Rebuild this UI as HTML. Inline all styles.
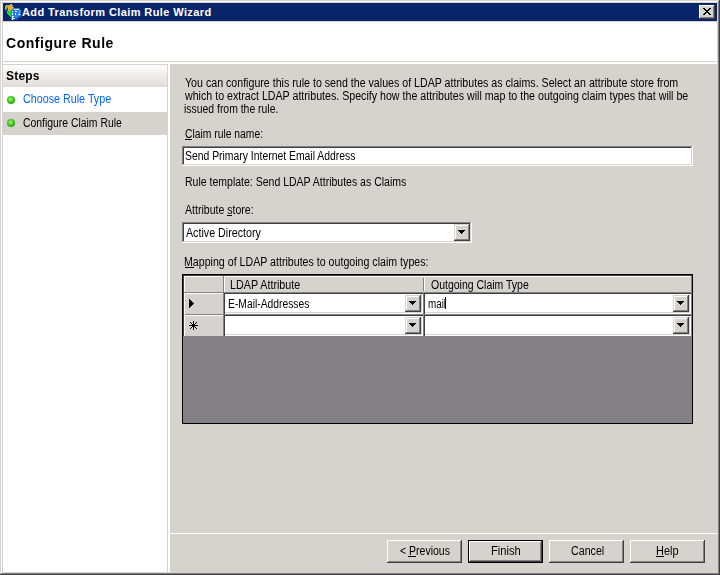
<!DOCTYPE html>
<html><head><meta charset="utf-8">
<style>
*{box-sizing:border-box;margin:0;padding:0}
html,body{width:720px;height:575px;overflow:hidden;background:#d6d3ce}
body{position:relative;font-family:"Liberation Sans",sans-serif;font-size:12px;color:#000}
.a{position:absolute}
.t{position:absolute;white-space:nowrap;font-size:12px;line-height:13px;transform-origin:0 0;filter:grayscale(1)}
</style></head><body>
<div class="a" style="left:0px;top:0px;width:720px;height:575px;background:#404040"></div>
<div class="a" style="left:0px;top:0px;width:719px;height:574px;background:#d6d3ce"></div>
<div class="a" style="left:1px;top:1px;width:718px;height:573px;background:#838183"></div>
<div class="a" style="left:1px;top:1px;width:717px;height:572px;background:#fff"></div>
<div class="a" style="left:2px;top:2px;width:716px;height:571px;background:#d6d3ce"></div>
<div class="a" style="left:3px;top:3px;width:714px;height:18px;background:#0a246a"></div>
<svg class="a" style="left:4px;top:4px" width="18" height="16" viewBox="0 0 18 16" shape-rendering="crispEdges"><rect x="6" y="0" width="1" height="1" fill="#80b8e0"/><rect x="7" y="0" width="1" height="1" fill="#80b8e0"/><rect x="2" y="1" width="1" height="1" fill="#f8a820"/><rect x="3" y="1" width="1" height="1" fill="#f8a820"/><rect x="4" y="1" width="1" height="1" fill="#f8a820"/><rect x="5" y="1" width="1" height="1" fill="#f8a820"/><rect x="6" y="1" width="1" height="1" fill="#60a8e8"/><rect x="7" y="1" width="1" height="1" fill="#80b8e0"/><rect x="8" y="1" width="1" height="1" fill="#60a8e8"/><rect x="1" y="2" width="1" height="1" fill="#f8a820"/><rect x="2" y="2" width="1" height="1" fill="#f8a820"/><rect x="3" y="2" width="1" height="1" fill="#20d040"/><rect x="4" y="2" width="1" height="1" fill="#f8a820"/><rect x="5" y="2" width="1" height="1" fill="#f8a820"/><rect x="6" y="2" width="1" height="1" fill="#f8a820"/><rect x="7" y="2" width="1" height="1" fill="#f8a820"/><rect x="8" y="2" width="1" height="1" fill="#f8a820"/><rect x="1" y="3" width="1" height="1" fill="#f8a820"/><rect x="2" y="3" width="1" height="1" fill="#20d040"/><rect x="3" y="3" width="1" height="1" fill="#20d040"/><rect x="4" y="3" width="1" height="1" fill="#f8a820"/><rect x="5" y="3" width="1" height="1" fill="#f8a820"/><rect x="6" y="3" width="1" height="1" fill="#f8a820"/><rect x="7" y="3" width="1" height="1" fill="#f8a820"/><rect x="8" y="3" width="1" height="1" fill="#f8a820"/><rect x="9" y="3" width="1" height="1" fill="#20d040"/><rect x="1" y="4" width="1" height="1" fill="#f8a820"/><rect x="2" y="4" width="1" height="1" fill="#20d040"/><rect x="3" y="4" width="1" height="1" fill="#1850c8"/><rect x="4" y="4" width="1" height="1" fill="#f8a820"/><rect x="5" y="4" width="1" height="1" fill="#f8a820"/><rect x="6" y="4" width="1" height="1" fill="#f8a820"/><rect x="7" y="4" width="1" height="1" fill="#f8a820"/><rect x="8" y="4" width="1" height="1" fill="#f8a820"/><rect x="9" y="4" width="1" height="1" fill="#20d040"/><rect x="10" y="4" width="1" height="1" fill="#2a80e0"/><rect x="11" y="4" width="1" height="1" fill="#2a80e0"/><rect x="12" y="4" width="1" height="1" fill="#2a80e0"/><rect x="13" y="4" width="1" height="1" fill="#2a80e0"/><rect x="14" y="4" width="1" height="1" fill="#2a80e0"/><rect x="15" y="4" width="1" height="1" fill="#2a80e0"/><rect x="1" y="5" width="1" height="1" fill="#60a8e8"/><rect x="2" y="5" width="1" height="1" fill="#1850c8"/><rect x="3" y="5" width="1" height="1" fill="#1850c8"/><rect x="4" y="5" width="1" height="1" fill="#f8a820"/><rect x="5" y="5" width="1" height="1" fill="#f8a820"/><rect x="6" y="5" width="1" height="1" fill="#f8a820"/><rect x="7" y="5" width="1" height="1" fill="#f8a820"/><rect x="8" y="5" width="1" height="1" fill="#2a80e0"/><rect x="9" y="5" width="1" height="1" fill="#2a80e0"/><rect x="10" y="5" width="1" height="1" fill="#d8ecff"/><rect x="11" y="5" width="1" height="1" fill="#d8ecff"/><rect x="12" y="5" width="1" height="1" fill="#d8ecff"/><rect x="13" y="5" width="1" height="1" fill="#d8ecff"/><rect x="14" y="5" width="1" height="1" fill="#d8ecff"/><rect x="15" y="5" width="1" height="1" fill="#2a80e0"/><rect x="2" y="6" width="1" height="1" fill="#1850c8"/><rect x="3" y="6" width="1" height="1" fill="#1850c8"/><rect x="4" y="6" width="1" height="1" fill="#f8a820"/><rect x="5" y="6" width="1" height="1" fill="#f8a820"/><rect x="6" y="6" width="1" height="1" fill="#20d040"/><rect x="7" y="6" width="1" height="1" fill="#2a80e0"/><rect x="8" y="6" width="1" height="1" fill="#2a80e0"/><rect x="9" y="6" width="1" height="1" fill="#2a80e0"/><rect x="10" y="6" width="1" height="1" fill="#2a80e0"/><rect x="11" y="6" width="1" height="1" fill="#2a80e0"/><rect x="12" y="6" width="1" height="1" fill="#2a80e0"/><rect x="13" y="6" width="1" height="1" fill="#2a80e0"/><rect x="14" y="6" width="1" height="1" fill="#2a80e0"/><rect x="15" y="6" width="1" height="1" fill="#60a8e8"/><rect x="16" y="6" width="1" height="1" fill="#2a80e0"/><rect x="2" y="7" width="1" height="1" fill="#1850c8"/><rect x="3" y="7" width="1" height="1" fill="#20d040"/><rect x="4" y="7" width="1" height="1" fill="#20d040"/><rect x="5" y="7" width="1" height="1" fill="#20d040"/><rect x="6" y="7" width="1" height="1" fill="#20d040"/><rect x="7" y="7" width="1" height="1" fill="#2a80e0"/><rect x="8" y="7" width="1" height="1" fill="#d8ecff"/><rect x="9" y="7" width="1" height="1" fill="#2a80e0"/><rect x="10" y="7" width="1" height="1" fill="#2a80e0"/><rect x="11" y="7" width="1" height="1" fill="#d8ecff"/><rect x="12" y="7" width="1" height="1" fill="#d8ecff"/><rect x="13" y="7" width="1" height="1" fill="#2a80e0"/><rect x="14" y="7" width="1" height="1" fill="#2a80e0"/><rect x="15" y="7" width="1" height="1" fill="#60a8e8"/><rect x="16" y="7" width="1" height="1" fill="#2a80e0"/><rect x="3" y="8" width="1" height="1" fill="#20d040"/><rect x="4" y="8" width="1" height="1" fill="#20d040"/><rect x="5" y="8" width="1" height="1" fill="#20d040"/><rect x="6" y="8" width="1" height="1" fill="#20d040"/><rect x="7" y="8" width="1" height="1" fill="#2a80e0"/><rect x="8" y="8" width="1" height="1" fill="#2a80e0"/><rect x="9" y="8" width="1" height="1" fill="#2a80e0"/><rect x="10" y="8" width="1" height="1" fill="#2a80e0"/><rect x="11" y="8" width="1" height="1" fill="#2a80e0"/><rect x="12" y="8" width="1" height="1" fill="#2a80e0"/><rect x="13" y="8" width="1" height="1" fill="#2a80e0"/><rect x="14" y="8" width="1" height="1" fill="#2a80e0"/><rect x="15" y="8" width="1" height="1" fill="#60a8e8"/><rect x="16" y="8" width="1" height="1" fill="#2a80e0"/><rect x="3" y="9" width="1" height="1" fill="#20d040"/><rect x="4" y="9" width="1" height="1" fill="#20d040"/><rect x="5" y="9" width="1" height="1" fill="#20d040"/><rect x="6" y="9" width="1" height="1" fill="#20d040"/><rect x="7" y="9" width="1" height="1" fill="#2a80e0"/><rect x="8" y="9" width="1" height="1" fill="#d8ecff"/><rect x="9" y="9" width="1" height="1" fill="#2a80e0"/><rect x="10" y="9" width="1" height="1" fill="#2a80e0"/><rect x="11" y="9" width="1" height="1" fill="#d8ecff"/><rect x="12" y="9" width="1" height="1" fill="#2a80e0"/><rect x="13" y="9" width="1" height="1" fill="#2a80e0"/><rect x="14" y="9" width="1" height="1" fill="#2a80e0"/><rect x="15" y="9" width="1" height="1" fill="#60a8e8"/><rect x="16" y="9" width="1" height="1" fill="#2a80e0"/><rect x="4" y="10" width="1" height="1" fill="#20d040"/><rect x="5" y="10" width="1" height="1" fill="#20d040"/><rect x="6" y="10" width="1" height="1" fill="#20d040"/><rect x="7" y="10" width="1" height="1" fill="#2a80e0"/><rect x="8" y="10" width="1" height="1" fill="#d8ecff"/><rect x="9" y="10" width="1" height="1" fill="#2a80e0"/><rect x="10" y="10" width="1" height="1" fill="#2a80e0"/><rect x="11" y="10" width="1" height="1" fill="#d8ecff"/><rect x="12" y="10" width="1" height="1" fill="#2a80e0"/><rect x="13" y="10" width="1" height="1" fill="#2a80e0"/><rect x="14" y="10" width="1" height="1" fill="#d8ecff"/><rect x="15" y="10" width="1" height="1" fill="#d8ecff"/><rect x="16" y="10" width="1" height="1" fill="#2a80e0"/><rect x="5" y="11" width="1" height="1" fill="#20d040"/><rect x="6" y="11" width="1" height="1" fill="#20d040"/><rect x="7" y="11" width="1" height="1" fill="#2a80e0"/><rect x="8" y="11" width="1" height="1" fill="#2a80e0"/><rect x="9" y="11" width="1" height="1" fill="#2a80e0"/><rect x="10" y="11" width="1" height="1" fill="#2a80e0"/><rect x="11" y="11" width="1" height="1" fill="#2a80e0"/><rect x="12" y="11" width="1" height="1" fill="#2a80e0"/><rect x="13" y="11" width="1" height="1" fill="#2a80e0"/><rect x="14" y="11" width="1" height="1" fill="#2a80e0"/><rect x="15" y="11" width="1" height="1" fill="#2a80e0"/><rect x="16" y="11" width="1" height="1" fill="#2a80e0"/><rect x="6" y="12" width="1" height="1" fill="#20d040"/><rect x="7" y="12" width="1" height="1" fill="#2a80e0"/><rect x="8" y="12" width="1" height="1" fill="#d8ecff"/><rect x="9" y="12" width="1" height="1" fill="#d8ecff"/><rect x="10" y="12" width="1" height="1" fill="#2a80e0"/><rect x="11" y="12" width="1" height="1" fill="#2a80e0"/><rect x="12" y="12" width="1" height="1" fill="#2a80e0"/><rect x="13" y="12" width="1" height="1" fill="#2a80e0"/><rect x="14" y="12" width="1" height="1" fill="#1848a8"/><rect x="15" y="12" width="1" height="1" fill="#1848a8"/><rect x="16" y="12" width="1" height="1" fill="#2a80e0"/><rect x="7" y="13" width="1" height="1" fill="#2a80e0"/><rect x="8" y="13" width="1" height="1" fill="#d8ecff"/><rect x="9" y="13" width="1" height="1" fill="#2a80e0"/><rect x="10" y="13" width="1" height="1" fill="#2a80e0"/><rect x="11" y="13" width="1" height="1" fill="#2a80e0"/><rect x="12" y="13" width="1" height="1" fill="#2a80e0"/><rect x="13" y="13" width="1" height="1" fill="#2a80e0"/><rect x="14" y="13" width="1" height="1" fill="#1848a8"/><rect x="15" y="13" width="1" height="1" fill="#1848a8"/><rect x="7" y="14" width="1" height="1" fill="#2a80e0"/><rect x="8" y="14" width="1" height="1" fill="#d8ecff"/><rect x="9" y="14" width="1" height="1" fill="#d8ecff"/><rect x="10" y="14" width="1" height="1" fill="#d8ecff"/><rect x="11" y="14" width="1" height="1" fill="#1848a8"/><rect x="12" y="14" width="1" height="1" fill="#1848a8"/><rect x="13" y="14" width="1" height="1" fill="#1848a8"/><rect x="7" y="15" width="1" height="1" fill="#2a80e0"/><rect x="8" y="15" width="1" height="1" fill="#d8ecff"/><rect x="9" y="15" width="1" height="1" fill="#2a80e0"/><rect x="10" y="15" width="1" height="1" fill="#1848a8"/><rect x="11" y="15" width="1" height="1" fill="#1848a8"/><rect x="12" y="15" width="1" height="1" fill="#1848a8"/><rect x="13" y="15" width="1" height="1" fill="#1848a8"/></svg>
<div class="t" style="left:22px;top:6px;color:#fff;filter:none;font-weight:bold;font-size:11px;letter-spacing:0.4px">Add Transform Claim Rule Wizard</div>
<div class="a" style="left:699px;top:5px;width:16px;height:14px;background:#404040"></div>
<div class="a" style="left:699px;top:5px;width:15px;height:13px;background:#fff"></div>
<div class="a" style="left:700px;top:6px;width:14px;height:12px;background:#838183"></div>
<div class="a" style="left:700px;top:6px;width:13px;height:11px;background:#d6d3ce"></div>
<div class="a" style="left:701px;top:7px;width:12px;height:10px;background:#d6d3ce"></div>
<svg class="a" style="left:699px;top:5px" width="16" height="14" shape-rendering="crispEdges"><path d="M4 3h2v1h1v1h2v-1h1v-1h2v1h-1v1h-1v1h-1v1h1v1h1v1h1v1h-2v-1h-1v-1h-2v1h-1v1h-2v-1h1v-1h1v-1h1v-1h-1v-1h-1v-1h-1z" fill="#000"/></svg>
<div class="a" style="left:3px;top:22px;width:714px;height:39px;background:#fff"></div>
<div class="t" style="left:6px;top:35px;font-size:14px;line-height:16px;font-weight:bold;letter-spacing:0.54px">Configure Rule</div>
<div class="a" style="left:3px;top:62px;width:714px;height:2px;background:#fff"></div>
<div class="a" style="left:3px;top:64px;width:164px;height:508px;background:#fff"></div>
<div class="a" style="left:3px;top:64px;width:164px;height:1px;background:#d6d3ce"></div>
<div class="a" style="left:3px;top:65px;width:164px;height:22px;background:linear-gradient(#fffefe,#dfdbd9)"></div>
<div class="a" style="left:167px;top:64px;width:1px;height:508px;background:#d6d3ce"></div>
<div class="a" style="left:168px;top:62px;width:2px;height:510px;background:#fff"></div>
<div class="t" style="left:6px;top:70px;font-weight:bold;letter-spacing:0.2px">Steps</div>
<div class="a" style="left:3px;top:112px;width:164px;height:23px;background:#d6d3ce"></div>
<div class="a" style="left:7px;top:96px;width:8px;height:8px;border-radius:50%;background:radial-gradient(circle at 45% 40%,#b0f890 0,#50d028 35%,#28a810 70%,#1a7a0a 100%)"></div>
<div class="a" style="left:7px;top:119px;width:8px;height:8px;border-radius:50%;background:radial-gradient(circle at 45% 40%,#b0f890 0,#50d028 35%,#28a810 70%,#1a7a0a 100%)"></div>
<div class="t" style="left:23px;top:93px;transform:scaleX(0.895);color:#0066ff;filter:none">Choose Rule Type</div>
<div class="t" style="left:23px;top:117px;transform:scaleX(0.866)">Configure Claim Rule</div>
<div class="a" style="left:170px;top:533px;width:547px;height:1px;background:#fff"></div>
<div class="t" style="left:185px;top:77px;transform:scaleX(0.8865)">You can configure this rule to send the values of LDAP attributes as claims. Select an attribute store from</div>
<div class="t" style="left:185px;top:90px;transform:scaleX(0.887)">which to extract LDAP attributes. Specify how the attributes will map to the outgoing claim types that will be</div>
<div class="t" style="left:184px;top:103px;transform:scaleX(0.868)">issued from the rule.</div>
<div class="t" style="left:185px;top:128px;transform:scaleX(0.86)">Claim rule name:</div>
<div class="a" style="left:185px;top:139px;width:7px;height:1px;background:#000"></div>
<div class="a" style="left:182px;top:146px;width:511px;height:20px;background:#fff"></div>
<div class="a" style="left:182px;top:146px;width:510px;height:19px;background:#838183"></div>
<div class="a" style="left:183px;top:147px;width:509px;height:18px;background:#d6d3ce"></div>
<div class="a" style="left:183px;top:147px;width:508px;height:17px;background:#404040"></div>
<div class="a" style="left:184px;top:148px;width:507px;height:16px;background:#fff"></div>
<div class="t" style="left:185px;top:150px;transform:scaleX(0.866)">Send Primary Internet Email Address</div>
<div class="t" style="left:185px;top:176px;transform:scaleX(0.876)">Rule template: Send LDAP Attributes as Claims</div>
<div class="t" style="left:185px;top:204px;transform:scaleX(0.88)">Attribute store:</div>
<div class="a" style="left:227px;top:215px;width:5px;height:1px;background:#000"></div>
<div class="a" style="left:182px;top:222px;width:290px;height:21px;background:#fff"></div>
<div class="a" style="left:182px;top:222px;width:289px;height:20px;background:#838183"></div>
<div class="a" style="left:183px;top:223px;width:288px;height:19px;background:#d6d3ce"></div>
<div class="a" style="left:183px;top:223px;width:287px;height:18px;background:#404040"></div>
<div class="a" style="left:184px;top:224px;width:286px;height:17px;background:#fff"></div>
<div class="a" style="left:454px;top:224px;width:16px;height:17px;background:#404040"></div>
<div class="a" style="left:454px;top:224px;width:15px;height:16px;background:#d6d3ce"></div>
<div class="a" style="left:455px;top:225px;width:14px;height:15px;background:#838183"></div>
<div class="a" style="left:455px;top:225px;width:13px;height:14px;background:#fff"></div>
<div class="a" style="left:456px;top:226px;width:12px;height:13px;background:#d6d3ce"></div>
<svg class="a" style="left:458px;top:230px" width="7" height="4"><path d="M0 0h7v1h-1v1h-1v1h-1v1h-1v-1h-1v-1h-1v-1h-1z" fill="#000"/></svg>
<div class="t" style="left:186px;top:227px;transform:scaleX(0.89)">Active Directory</div>
<div class="t" style="left:184px;top:256px;transform:scaleX(0.886)">Mapping of LDAP attributes to outgoing claim types:</div>
<div class="a" style="left:185px;top:267px;width:9px;height:1px;background:#000"></div>
<div class="a" style="left:182px;top:274px;width:511px;height:150px;background:#000"></div>
<div class="a" style="left:183px;top:275px;width:509px;height:148px;background:#838183"></div>
<div class="a" style="left:183px;top:275px;width:509px;height:1px;background:#404040"></div>
<div class="a" style="left:183px;top:275px;width:1px;height:61px;background:#404040"></div>
<div class="a" style="left:184px;top:276px;width:39px;height:17px;background:#838183"></div>
<div class="a" style="left:184px;top:276px;width:39px;height:16px;background:#fff"></div>
<div class="a" style="left:185px;top:277px;width:38px;height:15px;background:#d6d3ce"></div>
<div class="a" style="left:224px;top:276px;width:467px;height:17px;background:#838183"></div>
<div class="a" style="left:224px;top:276px;width:467px;height:16px;background:#fff"></div>
<div class="a" style="left:225px;top:277px;width:466px;height:15px;background:#d6d3ce"></div>
<div class="a" style="left:423px;top:278px;width:1px;height:13px;background:#838183"></div>
<div class="a" style="left:424px;top:278px;width:1px;height:13px;background:#fff"></div>
<div class="t" style="left:230px;top:279px;transform:scaleX(0.895)">LDAP Attribute</div>
<div class="t" style="left:431px;top:279px;transform:scaleX(0.874)">Outgoing Claim Type</div>
<div class="a" style="left:184px;top:293px;width:39px;height:22px;background:#fff"></div>
<div class="a" style="left:185px;top:294px;width:38px;height:21px;background:#d6d3ce"></div>
<div class="a" style="left:184px;top:315px;width:39px;height:21px;background:#fff"></div>
<div class="a" style="left:185px;top:316px;width:38px;height:20px;background:#d6d3ce"></div>
<div class="a" style="left:185px;top:314px;width:38px;height:1px;background:#838183"></div>
<svg class="a" style="left:189px;top:299px" width="5" height="9" shape-rendering="crispEdges"><path d="M0 0h1v1h1v1h1v1h1v1h1v1h-1v1h-1v1h-1v1h-1v1h-1z" fill="#000"/></svg>
<svg class="a" style="left:189px;top:321px" width="9" height="9" shape-rendering="crispEdges"><path d="M4 0h1v3h1v-1h1v-1h1v1h-1v1h-1v1h3v1h-3v1h1v1h1v1h-1v-1h-1v-1h-1v3h-1v-3h-1v1h-1v1h-1v-1h1v-1h1v-1h-3v-1h3v-1h-1v-1h-1v-1h1v1h1v1h1z" fill="#000"/></svg>
<div class="a" style="left:224px;top:293px;width:199px;height:21px;background:#404040"></div>
<div class="a" style="left:225px;top:294px;width:198px;height:20px;background:#fff"></div>
<div class="a" style="left:225px;top:294px;width:197px;height:19px;background:#d6d3ce"></div>
<div class="a" style="left:225px;top:294px;width:196px;height:18px;background:#fff"></div>
<div class="a" style="left:405px;top:295px;width:16px;height:17px;background:#404040"></div>
<div class="a" style="left:405px;top:295px;width:15px;height:16px;background:#d6d3ce"></div>
<div class="a" style="left:406px;top:296px;width:14px;height:15px;background:#838183"></div>
<div class="a" style="left:406px;top:296px;width:13px;height:14px;background:#fff"></div>
<div class="a" style="left:407px;top:297px;width:12px;height:13px;background:#d6d3ce"></div>
<svg class="a" style="left:409px;top:301px" width="7" height="4"><path d="M0 0h7v1h-1v1h-1v1h-1v1h-1v-1h-1v-1h-1v-1h-1z" fill="#000"/></svg>
<div class="a" style="left:424px;top:293px;width:267px;height:21px;background:#404040"></div>
<div class="a" style="left:425px;top:294px;width:266px;height:20px;background:#fff"></div>
<div class="a" style="left:425px;top:294px;width:265px;height:19px;background:#d6d3ce"></div>
<div class="a" style="left:425px;top:294px;width:264px;height:18px;background:#fff"></div>
<div class="a" style="left:673px;top:295px;width:16px;height:17px;background:#404040"></div>
<div class="a" style="left:673px;top:295px;width:15px;height:16px;background:#d6d3ce"></div>
<div class="a" style="left:674px;top:296px;width:14px;height:15px;background:#838183"></div>
<div class="a" style="left:674px;top:296px;width:13px;height:14px;background:#fff"></div>
<div class="a" style="left:675px;top:297px;width:12px;height:13px;background:#d6d3ce"></div>
<svg class="a" style="left:677px;top:301px" width="7" height="4"><path d="M0 0h7v1h-1v1h-1v1h-1v1h-1v-1h-1v-1h-1v-1h-1z" fill="#000"/></svg>
<div class="a" style="left:224px;top:315px;width:199px;height:21px;background:#404040"></div>
<div class="a" style="left:225px;top:316px;width:198px;height:20px;background:#fff"></div>
<div class="a" style="left:225px;top:316px;width:197px;height:19px;background:#d6d3ce"></div>
<div class="a" style="left:225px;top:316px;width:196px;height:18px;background:#fff"></div>
<div class="a" style="left:405px;top:317px;width:16px;height:17px;background:#404040"></div>
<div class="a" style="left:405px;top:317px;width:15px;height:16px;background:#d6d3ce"></div>
<div class="a" style="left:406px;top:318px;width:14px;height:15px;background:#838183"></div>
<div class="a" style="left:406px;top:318px;width:13px;height:14px;background:#fff"></div>
<div class="a" style="left:407px;top:319px;width:12px;height:13px;background:#d6d3ce"></div>
<svg class="a" style="left:409px;top:323px" width="7" height="4"><path d="M0 0h7v1h-1v1h-1v1h-1v1h-1v-1h-1v-1h-1v-1h-1z" fill="#000"/></svg>
<div class="a" style="left:424px;top:315px;width:267px;height:21px;background:#404040"></div>
<div class="a" style="left:425px;top:316px;width:266px;height:20px;background:#fff"></div>
<div class="a" style="left:425px;top:316px;width:265px;height:19px;background:#d6d3ce"></div>
<div class="a" style="left:425px;top:316px;width:264px;height:18px;background:#fff"></div>
<div class="a" style="left:673px;top:317px;width:16px;height:17px;background:#404040"></div>
<div class="a" style="left:673px;top:317px;width:15px;height:16px;background:#d6d3ce"></div>
<div class="a" style="left:674px;top:318px;width:14px;height:15px;background:#838183"></div>
<div class="a" style="left:674px;top:318px;width:13px;height:14px;background:#fff"></div>
<div class="a" style="left:675px;top:319px;width:12px;height:13px;background:#d6d3ce"></div>
<svg class="a" style="left:677px;top:323px" width="7" height="4"><path d="M0 0h7v1h-1v1h-1v1h-1v1h-1v-1h-1v-1h-1v-1h-1z" fill="#000"/></svg>
<div class="a" style="left:223px;top:293px;width:1px;height:43px;background:#838183"></div>
<div class="a" style="left:423px;top:293px;width:1px;height:43px;background:#838183"></div>
<div class="a" style="left:224px;top:314px;width:468px;height:1px;background:#838183"></div>
<div class="a" style="left:691px;top:276px;width:1px;height:60px;background:#838183"></div>
<div class="t" style="left:228px;top:298px;transform:scaleX(0.859)">E-Mail-Addresses</div>
<div class="t" style="left:428px;top:298px;transform:scaleX(0.82)">mail</div>
<div class="a" style="left:445px;top:297px;width:1px;height:12px;background:#000"></div>
<div class="a" style="left:387px;top:540px;width:75px;height:23px;background:#404040"></div>
<div class="a" style="left:387px;top:540px;width:74px;height:22px;background:#fff"></div>
<div class="a" style="left:388px;top:541px;width:73px;height:21px;background:#838183"></div>
<div class="a" style="left:388px;top:541px;width:72px;height:20px;background:#d6d3ce"></div>
<div class="a" style="left:389px;top:542px;width:71px;height:19px;background:#d6d3ce"></div>
<div class="t" style="left:400px;top:545px;transform:scaleX(0.875)">&lt; Previous</div>
<div class="a" style="left:408px;top:556px;width:8px;height:1px;background:#000"></div>
<div class="a" style="left:468px;top:540px;width:75px;height:23px;background:#000"></div>
<div class="a" style="left:469px;top:541px;width:73px;height:21px;background:#404040"></div>
<div class="a" style="left:469px;top:541px;width:72px;height:20px;background:#fff"></div>
<div class="a" style="left:470px;top:542px;width:71px;height:19px;background:#838183"></div>
<div class="a" style="left:470px;top:542px;width:70px;height:18px;background:#d6d3ce"></div>
<div class="a" style="left:471px;top:543px;width:69px;height:17px;background:#d6d3ce"></div>
<div class="t" style="left:491px;top:545px;transform:scaleX(0.93)">Finish</div>
<div class="a" style="left:549px;top:540px;width:75px;height:23px;background:#404040"></div>
<div class="a" style="left:549px;top:540px;width:74px;height:22px;background:#fff"></div>
<div class="a" style="left:550px;top:541px;width:73px;height:21px;background:#838183"></div>
<div class="a" style="left:550px;top:541px;width:72px;height:20px;background:#d6d3ce"></div>
<div class="a" style="left:551px;top:542px;width:71px;height:19px;background:#d6d3ce"></div>
<div class="t" style="left:571px;top:545px;transform:scaleX(0.89)">Cancel</div>
<div class="a" style="left:630px;top:540px;width:75px;height:23px;background:#404040"></div>
<div class="a" style="left:630px;top:540px;width:74px;height:22px;background:#fff"></div>
<div class="a" style="left:631px;top:541px;width:73px;height:21px;background:#838183"></div>
<div class="a" style="left:631px;top:541px;width:72px;height:20px;background:#d6d3ce"></div>
<div class="a" style="left:632px;top:542px;width:71px;height:19px;background:#d6d3ce"></div>
<div class="t" style="left:656px;top:545px;transform:scaleX(0.91)">Help</div>
<div class="a" style="left:656px;top:556px;width:8px;height:1px;background:#000"></div>
</body></html>
